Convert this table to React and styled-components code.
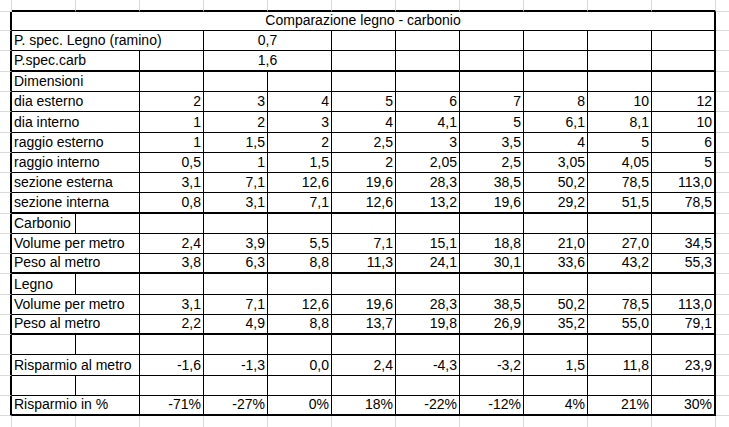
import React from 'react';
import styled, { createGlobalStyle } from 'styled-components';

const GlobalStyle = createGlobalStyle`
  html, body {
    margin: 0;
    padding: 0;
    background: #fff;
    overflow: hidden;
  }
`;

// altezze delle righe, compresa la riga di bordo sopra e quella sotto
const ROW_HEIGHTS = [12, 19, 20, 21, 20, 20, 21, 20, 20, 20, 21, 20, 20, 20, 21, 20, 20, 20, 21, 20, 20, 11];
const THICK_ROWS = [3, 10, 13, 16, 20];

const borders = {
  none: '0 none',
  grid: '1px solid #dadada',
  thin: '1px solid #000',
  thick: '2px solid #000',
};

const Sheet = styled.div`
  display: grid;
  grid-template-columns: 12px repeat(11, 64px) 1fr;
  grid-template-rows: ${ROW_HEIGHTS.map((h) => `${h}px`).join(' ')};
  width: 729px;
  height: 427px;
  font-family: 'Liberation Sans', Arial, sans-serif;
  font-size: 14px;
  color: #000;
  background: #fff;
`;

const Cell = styled.div`
  box-sizing: border-box;
  grid-column: span ${(p) => p.$span || 1};
  display: flex;
  align-items: flex-end;
  justify-content: ${(p) => (p.$align === 'right' ? 'flex-end' : p.$align === 'center' ? 'center' : 'flex-start')};
  padding: 0 2px 2px 2px;
  line-height: 16px;
  white-space: nowrap;
  overflow: visible;
  border-right: ${(p) => borders[p.$r || 'none']};
  border-bottom: ${(p) => borders[p.$b || 'none']};
`;

const dataRows = [
  { kind: 'title', text: 'Comparazione legno - carbonio' },
  { kind: 'spec', label: 'P. spec. Legno (ramino)', span: 3, value: '0,7' },
  { kind: 'spec', label: 'P.spec.carb', span: 2, value: '1,6' },
  { kind: 'data', label: 'Dimensioni', values: Array(9).fill('') },
  { kind: 'data', label: 'dia esterno', values: ['2', '3', '4', '5', '6', '7', '8', '10', '12'] },
  { kind: 'data', label: 'dia interno', values: ['1', '2', '3', '4', '4,1', '5', '6,1', '8,1', '10'] },
  { kind: 'data', label: 'raggio esterno', values: ['1', '1,5', '2', '2,5', '3', '3,5', '4', '5', '6'] },
  { kind: 'data', label: 'raggio interno', values: ['0,5', '1', '1,5', '2', '2,05', '2,5', '3,05', '4,05', '5'] },
  { kind: 'data', label: 'sezione esterna', values: ['3,1', '7,1', '12,6', '19,6', '28,3', '38,5', '50,2', '78,5', '113,0'] },
  { kind: 'data', label: 'sezione interna', values: ['0,8', '3,1', '7,1', '12,6', '13,2', '19,6', '29,2', '51,5', '78,5'] },
  { kind: 'section', label: 'Carbonio' },
  { kind: 'data', label: 'Volume per metro', values: ['2,4', '3,9', '5,5', '7,1', '15,1', '18,8', '21,0', '27,0', '34,5'] },
  { kind: 'data', label: 'Peso al metro', values: ['3,8', '6,3', '8,8', '11,3', '24,1', '30,1', '33,6', '43,2', '55,3'] },
  { kind: 'section', label: 'Legno' },
  { kind: 'data', label: 'Volume per metro', values: ['3,1', '7,1', '12,6', '19,6', '28,3', '38,5', '50,2', '78,5', '113,0'] },
  { kind: 'data', label: 'Peso al metro', values: ['2,2', '4,9', '8,8', '13,7', '19,8', '26,9', '35,2', '55,0', '79,1'] },
  { kind: 'section', label: '' },
  { kind: 'data', label: 'Risparmio al metro', values: ['-1,6', '-1,3', '0,0', '2,4', '-4,3', '-3,2', '1,5', '11,8', '23,9'] },
  { kind: 'section', label: '' },
  { kind: 'data', label: 'Risparmio in %', values: ['-71%', '-27%', '0%', '18%', '-22%', '-12%', '4%', '21%', '30%'] },
];

// celle interne di una riga: ogni riga occupa le colonne 1..11
function rowCells(row, b) {
  const last = (col) => (col === 11 ? 'thick' : 'thin');
  const cells = [];

  if (row.kind === 'title') {
    cells.push(<Cell key="t" $span={11} $align="center" $r="thick" $b={b}>{row.text}</Cell>);
    return cells;
  }

  if (row.kind === 'spec') {
    cells.push(<Cell key="l" $span={row.span} $r="thin" $b={b}>{row.label}</Cell>);
    if (row.span === 2) cells.push(<Cell key="e" $r="thin" $b={b} />);
    cells.push(<Cell key="v" $span={2} $align="center" $r="thin" $b={b}>{row.value}</Cell>);
    for (let col = 6; col <= 11; col++) {
      cells.push(<Cell key={col} $r={last(col)} $b={b} />);
    }
    return cells;
  }

  if (row.kind === 'section') {
    cells.push(<Cell key="l" $r="thin" $b={b}>{row.label}</Cell>);
    for (let col = 2; col <= 11; col++) {
      cells.push(<Cell key={col} $r={last(col)} $b={b} />);
    }
    return cells;
  }

  cells.push(<Cell key="l" $span={2} $r="thin" $b={b}>{row.label}</Cell>);
  row.values.forEach((v, i) => {
    cells.push(
      <Cell key={i} $align="right" $r={last(i + 3)} $b={b}>{v}</Cell>
    );
  });
  return cells;
}

export default function App() {
  const top = [<Cell key="c0" $r="grid" $b="grid" />];
  for (let col = 1; col <= 11; col++) {
    top.push(<Cell key={col} $r="grid" $b="thick" />);
  }
  top.push(<Cell key="c12" $b="grid" />);

  const bottom = [];
  for (let col = 0; col <= 11; col++) {
    bottom.push(<Cell key={col} $r="grid" />);
  }
  bottom.push(<Cell key="c12" />);

  return (
    <>
      <GlobalStyle />
      <Sheet>
        {top}
        {dataRows.map((row, i) => {
          const r = i + 1;
          const b = THICK_ROWS.includes(r) ? 'thick' : 'thin';
          return (
            <React.Fragment key={r}>
              <Cell $r="thick" $b="grid" />
              {rowCells(row, b)}
              <Cell $b="grid" />
            </React.Fragment>
          );
        })}
        {bottom}
      </Sheet>
    </>
  );
}
